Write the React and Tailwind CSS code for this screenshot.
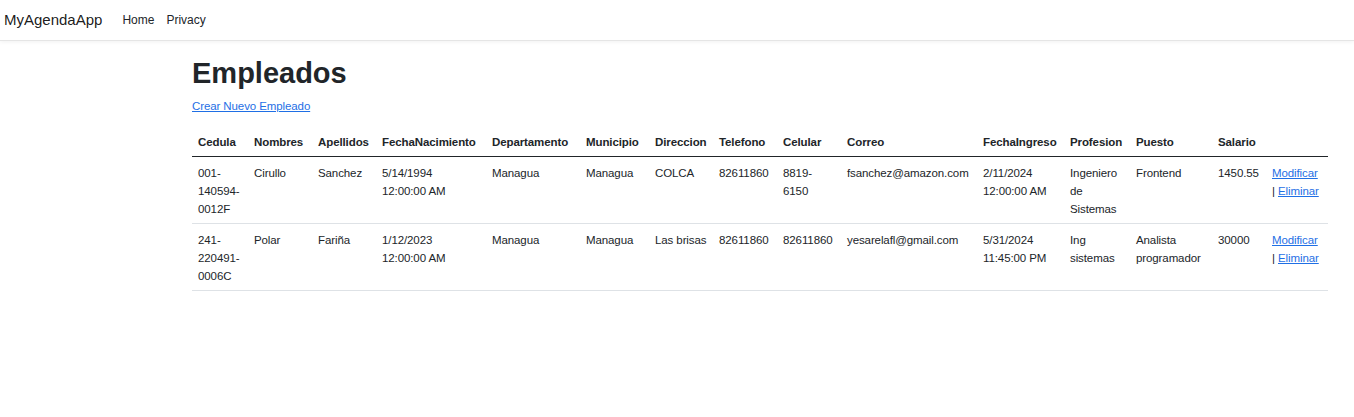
const rows = [
  {
    cedula: '001-140594-0012F',
    nombres: 'Cirullo',
    apellidos: 'Sanchez',
    nacimiento: ['5/14/1994', '12:00:00 AM'],
    departamento: 'Managua',
    municipio: 'Managua',
    direccion: 'COLCA',
    telefono: '82611860',
    celular: '8819-6150',
    correo: 'fsanchez@amazon.com',
    ingreso: ['2/11/2024', '12:00:00 AM'],
    profesion: 'Ingeniero de Sistemas',
    puesto: 'Frontend',
    salario: '1450.55',
  },
  {
    cedula: '241-220491-0006C',
    nombres: 'Polar',
    apellidos: 'Fariña',
    nacimiento: ['1/12/2023', '12:00:00 AM'],
    departamento: 'Managua',
    municipio: 'Managua',
    direccion: 'Las brisas',
    telefono: '82611860',
    celular: '82611860',
    correo: 'yesarelafl@gmail.com',
    ingreso: ['5/31/2024', '11:45:00 PM'],
    profesion: 'Ing sistemas',
    puesto: 'Analista programador',
    salario: '30000',
  },
];

const columns = [
  ['Cedula', 'cedula', 'w-[56px]'],
  ['Nombres', 'nombres', 'w-[64px]'],
  ['Apellidos', 'apellidos', 'w-[64px]'],
  ['FechaNacimiento', 'nacimiento', 'w-[110px]'],
  ['Departamento', 'departamento', 'w-[94px]'],
  ['Municipio', 'municipio', 'w-[69px]'],
  ['Direccion', 'direccion', 'w-[64px]'],
  ['Telefono', 'telefono', 'w-[64px]'],
  ['Celular', 'celular', 'w-[64px]'],
  ['Correo', 'correo', 'w-[136px]'],
  ['FechaIngreso', 'ingreso', 'w-[87px]'],
  ['Profesion', 'profesion', 'w-[66px]'],
  ['Puesto', 'puesto', 'w-[82px]'],
  ['Salario', 'salario', 'w-[54px]'],
];

const cell = (v) =>
  Array.isArray(v) ? (
    <>
      {v[0]}
      <br />
      {v[1]}
    </>
  ) : (
    v
  );

export default function App() {
  return (
    <div className="min-h-[417px] bg-white text-[#212529] font-['Liberation_Sans',Arial,sans-serif] text-[11.5px] leading-[18px] tracking-[-0.1px]">
      <nav className="h-[41px] flex items-center border-b border-[#e5e5e5] shadow-[0_1px_4px_rgba(0,0,0,0.06)]">
        <a className="ml-[4px] text-[15px] leading-[24px] text-black/90 tracking-normal">MyAgendaApp</a>
        <ul className="flex ml-[14px] text-[12px] tracking-normal">
          <li className="px-[6px] text-[#212529]">Home</li>
          <li className="px-[6px] text-[#212529]">Privacy</li>
        </ul>
      </nav>

      <main className="ml-[192px] w-[1136px] pt-[15px]">
        <h1 className="text-[29px] leading-[35px] font-bold mb-[5px] tracking-normal">Empleados</h1>
        <p className="pt-[1px]">
          <a className="text-[#1f6fe5] underline">Crear Nuevo Empleado</a>
        </p>

        <table className="table-fixed w-full mt-[11px] border-collapse">
          <thead>
            <tr className="border-b border-[#212529]">
              {columns.map(([label, , w]) => (
                <th key={label} className={`${w} text-left font-bold px-[6px] pt-[7px] pb-[5px] whitespace-nowrap`}>
                  {label}
                </th>
              ))}
              <th className="p-[6px]"></th>
            </tr>
          </thead>
          <tbody>
            {rows.map((r) => (
              <tr key={r.cedula} className="border-b border-[#dee2e6] align-top">
                {columns.map(([label, key]) => (
                  <td key={label} className="px-[6px] pt-[7px] pb-[5px]">
                    {cell(r[key])}
                  </td>
                ))}
                <td className="px-[6px] pt-[7px] pb-[5px]">
                  <a className="text-[#1f6fe5] underline">Modificar</a> |{' '}
                  <a className="text-[#1f6fe5] underline">Eliminar</a>
                </td>
              </tr>
            ))}
          </tbody>
        </table>
      </main>
    </div>
  );
}
